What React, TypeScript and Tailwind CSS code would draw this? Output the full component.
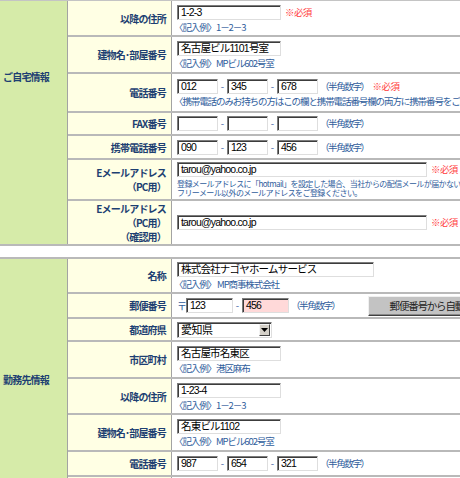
import React from "react";

const CJK = "font-['Noto_Sans_CJK_JP',sans-serif]";
const INP = "font-['Liberation_Sans','Noto_Sans_CJK_JP',sans-serif]";

function Input({ w, value = "", pink = false }: { w: string; value?: string; pink?: boolean }) {
  return (
    <div
      className={`${w} h-[15px] shrink-0 border border-t-[#7c7c7c] border-l-[#7c7c7c] border-b-[#dedede] border-r-[#dedede] shadow-[inset_1px_1px_0_#3c3c3c] ${
        pink ? "bg-[#ffd9d9]" : "bg-white"
      } ${INP} text-[10.5px] tracking-[-0.8px] leading-[13px] pl-[3px] text-black whitespace-nowrap overflow-hidden`}
    >
      {value}
    </div>
  );
}

function Note({ children }: { children: React.ReactNode }) {
  return (
    <div className={`${CJK} text-[9.5px] tracking-[-1.1px] leading-[10px] text-[#2f5d9c] whitespace-nowrap -ml-[3px]`}>{children}</div>
  );
}

function Req() {
  return <span className={`${CJK} text-[9.5px] tracking-[-0.6px] text-[#ff3b3b] ml-[4px]`}>※必須</span>;
}

function Han() {
  return <span className={`${CJK} text-[9.5px] tracking-[-1.4px] text-[#2f5d9c] ml-[2px]`}>（半角数字）</span>;
}

function Dash() {
  return <span className={`${INP} text-[10px] text-[#6a86b8] w-[9px] text-center shrink-0`}>-</span>;
}

function Phone({ a = "", b = "", c = "", req = false }: { a?: string; b?: string; c?: string; req?: boolean }) {
  return (
    <div className="flex items-center whitespace-nowrap">
      <Input w="w-[41px]" value={a} />
      <Dash />
      <Input w="w-[41px]" value={b} />
      <Dash />
      <Input w="w-[41px]" value={c} />
      <Han />
      {req && <Req />}
    </div>
  );
}

function Row({
  h,
  label,
  children,
}: {
  h: string;
  label: React.ReactNode;
  children: React.ReactNode;
}) {
  return (
    <div className={`flex border-b-2 border-[#b9b9b9] ${h}`}>
      <div
        className={`w-[104px] shrink-0 bg-[#ffffe4] border-r border-[#a3a3a3] flex flex-col justify-center items-end pr-[5px] ${CJK} text-[10px] font-bold text-[#1d3f72] tracking-[-0.8px] text-right`}
      >
        {label}
      </div>
      <div className="flex-1 min-w-0 overflow-hidden flex flex-col justify-center pl-[5px] gap-[2px]">{children}</div>
    </div>
  );
}

function Green({ text, pt }: { text: string; pt: string }) {
  return (
    <div
      className={`w-[68px] shrink-0 bg-[#d6eba9] border-r border-[#a3a3a3] ${pt} pl-[3px] ${CJK} text-[10px] font-bold text-[#1d3f72] tracking-[-0.8px] leading-[12px]`}
    >
      {text}
    </div>
  );
}

export default function App() {
  return (
    <div className="w-[460px] h-[478px] overflow-hidden bg-white">
      {/* 自宅 */}
      <div className="flex border-t border-[#c4c4c4] border-b-2 border-b-[#b9b9b9]">
        <Green text="ご自宅情報" pt="pt-[70px]" />
        <div className="flex-1 min-w-0 flex flex-col">
          <Row h="h-[36px]" label="以降の住所">
            <div className="flex items-center">
              <Input w="w-[104px]" value="1-2-3" />
              <Req />
            </div>
            <Note>〈記入例〉1－2－3</Note>
          </Row>
          <Row h="h-[37px]" label="建物名･部屋番号">
            <Input w="w-[104px]" value="名古屋ビル1101号室" />
            <Note>〈記入例〉MPビル602号室</Note>
          </Row>
          <Row h="h-[39px]" label="電話番号">
            <Phone a="012" b="345" c="678" req />
            <Note>〈携帯電話のみお持ちの方はこの欄と携帯電話番号欄の両方に携帯番号をご記入ください〉</Note>
          </Row>
          <Row h="h-[23px]" label="FAX番号">
            <Phone />
          </Row>
          <Row h="h-[24px]" label="携帯電話番号">
            <Phone a="090" b="123" c="456" />
          </Row>
          <Row
            h="h-[41px]"
            label={
              <div className="leading-[14px]">
                <div>Eメールアドレス</div>
                <div>（PC用）</div>
              </div>
            }
          >
            <div className="flex items-center">
              <Input w="w-[250px]" value="tarou@yahoo.co.jp" />
              <Req />
            </div>
            <div className={`${CJK} text-[8px] tracking-[-0.6px] leading-[9px] text-[#2f5d9c] whitespace-nowrap`}>
              <div>登録メールアドレスに「hotmail」を設定した場合、当社からの配信メールが届かない可能性があります。</div>
              <div>フリーメール以外のメールアドレスをご登録ください。</div>
            </div>
          </Row>
          <div className="flex h-[43px]">
            <div
              className={`w-[104px] shrink-0 bg-[#ffffe4] border-r border-[#a3a3a3] flex flex-col justify-center items-end pr-[5px] ${CJK} text-[10px] font-bold text-[#1d3f72] tracking-[-0.8px] leading-[14px] text-right`}
            >
              <div>Eメールアドレス</div>
              <div>（PC用）</div>
              <div>（確認用）</div>
            </div>
            <div className="flex-1 min-w-0 overflow-hidden flex flex-col justify-center pl-[5px]">
              <div className="flex items-center">
                <Input w="w-[250px]" value="tarou@yahoo.co.jp" />
                <Req />
              </div>
            </div>
          </div>
        </div>
      </div>

      <div className="h-[11px]" />

      {/* 勤務先 */}
      <div className="flex border-t-2 border-[#b9b9b9]">
        <Green text="勤務先情報" pt="pt-[115px]" />
        <div className="flex-1 min-w-0 flex flex-col">
          <Row h="h-[35px]" label="名称">
            <Input w="w-[197px]" value="株式会社ナゴヤホームサービス" />
            <Note>〈記入例〉 MP商事株式会社</Note>
          </Row>
          <Row h="h-[25px]" label="郵便番号">
            <div className="flex items-center whitespace-nowrap">
              <span className={`${CJK} text-[10px] text-[#2f5d9c] w-[9px] shrink-0`}>〒</span>
              <Input w="w-[47px]" value="123" />
              <Dash />
              <Input w="w-[47px]" value="456" pink />
              <Han />
              <div className="ml-[28px] w-[156px] h-[20px] shrink-0 bg-[#c3c3c3] border border-t-[#f0f0f0] border-l-[#f0f0f0] border-b-[#404040] border-r-[#404040] shadow-[inset_-1px_-1px_0_#888888] flex items-center pl-[21px]">
                <span className={`${CJK} text-[10.5px] text-[#222222] tracking-[-1.2px]`}>郵便番号から自動入力</span>
              </div>
            </div>
          </Row>
          <Row h="h-[23px]" label="都道府県">
            <div className="w-[95px] h-[16px] border border-t-[#7c7c7c] border-l-[#7c7c7c] border-b-[#dedede] border-r-[#dedede] shadow-[inset_1px_1px_0_#3c3c3c] bg-white flex items-center justify-between pl-[3px] pr-[1px]">
              <span className={`${CJK} text-[11px] leading-[13px] text-black tracking-[-0.5px]`}>愛知県</span>
              <div className="w-[11px] h-[12px] bg-[#d4d0c8] border border-t-[#f4f4f4] border-l-[#f4f4f4] border-b-[#404040] border-r-[#404040] flex items-center justify-center">
                <svg width="7" height="4" viewBox="0 0 7 4">
                  <path d="M0 0 L7 0 L3.5 4 Z" fill="#000" />
                </svg>
              </div>
            </div>
          </Row>
          <Row h="h-[37px]" label="市区町村">
            <Input w="w-[104px]" value="名古屋市名東区" />
            <Note>〈記入例〉港区麻布</Note>
          </Row>
          <Row h="h-[36px]" label="以降の住所">
            <Input w="w-[104px]" value="1-23-4" />
            <Note>〈記入例〉1－2－3</Note>
          </Row>
          <Row h="h-[37px]" label="建物名･部屋番号">
            <Input w="w-[104px]" value="名東ビル1102" />
            <Note>〈記入例〉MPビル602号室</Note>
          </Row>
          <Row h="h-[25px]" label="電話番号">
            <Phone a="987" b="654" c="321" />
          </Row>
          <Row h="h-[24px]" label="FAX番号">
            <Phone />
          </Row>
        </div>
      </div>
    </div>
  );
}
